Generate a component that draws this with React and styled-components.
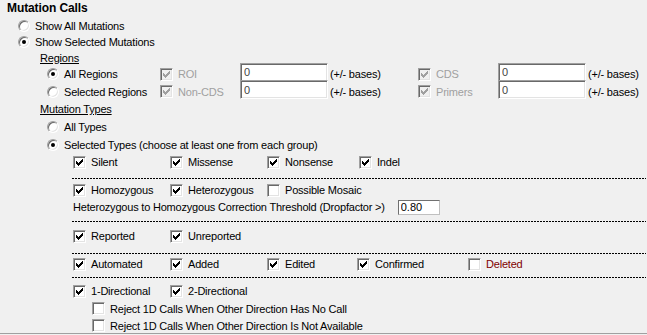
import React from "react";
import styled, { createGlobalStyle } from "styled-components";

const GlobalStyle = createGlobalStyle`
  html, body {
    margin: 0;
    background: #f0f0f0;
  }
  body {
    font-family: "Liberation Sans", Arial, sans-serif;
    font-size: 11px;
    letter-spacing: -0.2px;
    color: #000;
  }
`;

const Tick = ({ color }) => (
  <svg width="7" height="7" viewBox="0 0 7 7" shapeRendering="crispEdges">
    <g fill={color}>
      <rect x="6" y="0" width="1" height="1" />
      <rect x="5" y="1" width="2" height="1" />
      <rect x="0" y="2" width="1" height="1" />
      <rect x="4" y="2" width="3" height="1" />
      <rect x="0" y="3" width="2" height="1" />
      <rect x="3" y="3" width="3" height="1" />
      <rect x="0" y="4" width="5" height="1" />
      <rect x="1" y="5" width="3" height="1" />
      <rect x="2" y="6" width="1" height="1" />
    </g>
  </svg>
);

const Check = ({ checked, disabled, label, red }) => (
  <StOption>
    <StBox $disabled={disabled}>
      {checked && <Tick color={disabled ? "#a0a0a0" : "#000"} />}
    </StBox>
    <StLabel $disabled={disabled} $red={red}>{label}</StLabel>
  </StOption>
);

const Radio = ({ checked, label }) => (
  <StOption>
    <StRadio>{checked && <StDot />}</StRadio>
    <StLabel>{label}</StLabel>
  </StOption>
);

const RegionRow = ({ radio, checked, left, right, h }) => (
  <StRow $h={h} $indent={47}>
    <StCell $w={113}>
      <Radio checked={checked} label={radio} />
    </StCell>
    <StCell $w={80}>
      <Check checked disabled label={left} />
    </StCell>
    <StField readOnly value="0" />
    <StSuffix>(+/- bases)</StSuffix>
    <StCell $w={80}>
      <Check checked disabled label={right} />
    </StCell>
    <StField readOnly value="0" />
    <StSuffix>(+/- bases)</StSuffix>
  </StRow>
);

const CheckRow = ({ items, h, mt, indent = 73 }) => (
  <StRow $h={h} $mt={mt} $indent={indent}>
    {items.map((it) => (
      <StCell key={it.label} $w={it.w}>
        <Check checked={it.checked} label={it.label} red={it.red} />
      </StCell>
    ))}
  </StRow>
);

const App = () => {
  return (
    <>
      <GlobalStyle />
      <StPanel>
        <StTitle>Mutation Calls</StTitle>
        <StRow $indent={18}>
          <Radio label="Show All Mutations" />
        </StRow>
        <StRow $h={16} $indent={18}>
          <Radio checked label="Show Selected Mutations" />
        </StRow>
        <StRow $h={15} $indent={40}>
          <StHeading>Regions</StHeading>
        </StRow>
        <RegionRow h={18} radio="All Regions" checked left="ROI" right="CDS" />
        <RegionRow h={17} radio="Selected Regions" left="Non-CDS" right="Primers" />
        <StRow $h={18} $indent={40}>
          <StHeading>Mutation Types</StHeading>
        </StRow>
        <StRow $h={18} $indent={47}>
          <Radio label="All Types" />
        </StRow>
        <StRow $indent={47}>
          <Radio checked label="Selected Types (choose at least one from each group)" />
        </StRow>

        <CheckRow
          h={18}
          items={[
            { label: "Silent", checked: true, w: 97 },
            { label: "Missense", checked: true, w: 97 },
            { label: "Nonsense", checked: true, w: 92 },
            { label: "Indel", checked: true },
          ]}
        />
        <StDots $mt={7} />
        <CheckRow
          h={18}
          mt={2}
          items={[
            { label: "Homozygous", checked: true, w: 97 },
            { label: "Heterozygous", checked: true, w: 97 },
            { label: "Possible Mosaic" },
          ]}
        />
        <StRow $h={16} $indent={73}>
          <StLabel>Heterozygous to Homozygous Correction Threshold (Dropfactor &gt;)</StLabel>
          <StThreshold readOnly value="0.80" />
        </StRow>
        <StDots $mt={6} />
        <CheckRow
          h={18}
          mt={5}
          items={[
            { label: "Reported", checked: true, w: 97 },
            { label: "Unreported", checked: true },
          ]}
        />
        <StDots $mt={8} />
        <CheckRow
          h={18}
          mt={1}
          items={[
            { label: "Automated", checked: true, w: 97 },
            { label: "Added", checked: true, w: 97 },
            { label: "Edited", checked: true, w: 90 },
            { label: "Confirmed", checked: true, w: 111 },
            { label: "Deleted", red: true },
          ]}
        />
        <StDots $mt={4} />
        <CheckRow
          h={18}
          mt={4}
          items={[
            { label: "1-Directional", checked: true, w: 97 },
            { label: "2-Directional", checked: true },
          ]}
        />
        <CheckRow indent={92} items={[{ label: "Reject 1D Calls When Other Direction Has No Call" }]} />
        <CheckRow indent={92} items={[{ label: "Reject 1D Calls When Other Direction Is Not Available" }]} />
      </StPanel>
    </>
  );
};

export default App;

const StPanel = styled.div`
  width: 647px;
  height: 333px;
  border-bottom: 1px solid #a0a0a0;
  overflow: hidden;
  background: #f0f0f0;
`;

const StTitle = styled.div`
  height: 17px;
  line-height: 17px;
  padding-left: 7px;
  font-size: 12px;
  font-weight: bold;
  letter-spacing: -0.1px;
`;

const StRow = styled.div`
  display: flex;
  align-items: center;
  height: ${(p) => p.$h || 17}px;
  margin-top: ${(p) => p.$mt || 0}px;
  padding-left: ${(p) => p.$indent || 0}px;
  white-space: nowrap;
`;

const StCell = styled.div`
  flex: none;
  width: ${(p) => (p.$w ? `${p.$w}px` : "auto")};
`;

const StHeading = styled.span`
  text-decoration: underline;
`;

const StOption = styled.label`
  display: flex;
  align-items: center;
  gap: 5px;
`;

const StLabel = styled.span`
  color: ${(p) => (p.$disabled ? "#a0a0a0" : p.$red ? "#800000" : "#000")};
`;

const StBox = styled.span`
  flex: none;
  box-sizing: border-box;
  width: 13px;
  height: 13px;
  display: flex;
  align-items: center;
  justify-content: center;
  background: ${(p) => (p.$disabled ? "#f0f0f0" : "#fff")};
  border: 1px solid;
  border-color: #a0a0a0 #fff #fff #a0a0a0;
  box-shadow: inset 1px 1px #696969, inset -1px -1px #e3e3e3;
`;

const StRadio = styled.span`
  flex: none;
  box-sizing: border-box;
  width: 12px;
  height: 12px;
  border-radius: 50%;
  display: flex;
  align-items: center;
  justify-content: center;
  background: #fff;
  border: 1px solid;
  border-color: #a0a0a0 #fff #fff #a0a0a0;
  box-shadow: inset 1px 1px #696969, inset -1px -1px #e3e3e3;
`;

const StDot = styled.span`
  width: 4px;
  height: 4px;
  border-radius: 50%;
  background: #000;
`;

const StField = styled.input`
  flex: none;
  box-sizing: border-box;
  width: 88px;
  height: 19px;
  margin: -4px 0 0;
  padding: 0 3px;
  font: inherit;
  color: #444;
  background: #fff;
  border: 1px solid;
  border-color: #a0a0a0 #fff #fff #a0a0a0;
  box-shadow: inset 1px 1px #696969, inset -1px -1px #e3e3e3;
  outline: none;
`;

const StSuffix = styled.span`
  flex: none;
  width: 88px;
  margin-left: 2px;
`;

const StThreshold = styled.input`
  flex: none;
  box-sizing: border-box;
  width: 42px;
  height: 15px;
  margin-left: 13px;
  padding: 0 2px;
  font: inherit;
  color: #000;
  background: #fff;
  border: 1px solid;
  border-color: #707070 #c0c0c0 #c0c0c0 #707070;
  outline: none;
`;

const StDots = styled.div`
  height: 1px;
  margin: ${(p) => p.$mt || 0}px 1px 0 72px;
  background: repeating-linear-gradient(90deg, #000 0 2px, transparent 2px 3px);
`;
